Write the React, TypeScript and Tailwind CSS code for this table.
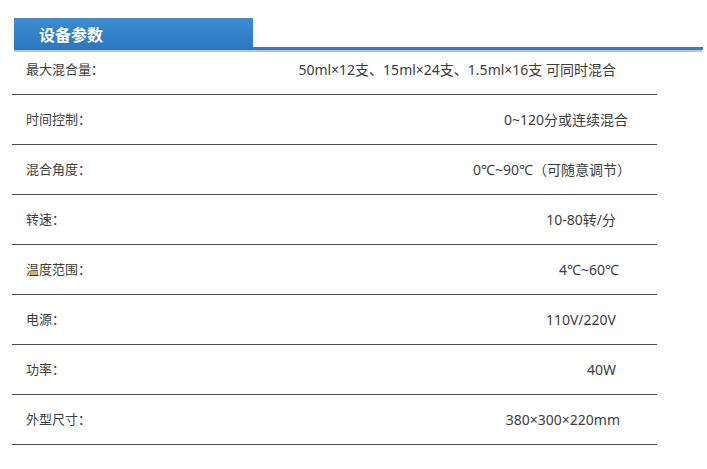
const rows = [
  { label: "最大混合量：", value: "50ml×12支、15ml×24支、1.5ml×16支 可同时混合", pr: "pr-[41px]" },
  { label: "时间控制：", value: "0~120分或连续混合", pr: "pr-[29px]" },
  { label: "混合角度：", value: "0℃~90℃（可随意调节）", pr: "pr-[26px]" },
  { label: "转速：", value: "10-80转/分", pr: "pr-[41px]" },
  { label: "温度范围：", value: "4℃~60℃", pr: "pr-[38px]" },
  { label: "电源：", value: "110V/220V", pr: "pr-[41px]" },
  { label: "功率：", value: "40W", pr: "pr-[41px]" },
  { label: "外型尺寸：", value: "380×300×220mm", pr: "pr-[37px]" },
];

export default function App() {
  return (
    <div
      className="w-[707px] h-[469px] bg-white text-[#3d3d3d]"
      style={{ fontFamily: '"Noto Sans", "Noto Sans CJK SC", sans-serif' }}
    >
      <div className="pt-[18px] pl-[14px] w-[703px]">
        <div className="flex items-end">
          <div
            className="w-[239px] h-[32px] bg-gradient-to-b from-[#3c8dd2] to-[#2a77c0] flex items-center pl-[25px] text-white text-[16px] font-bold"
            style={{ fontFamily: '"Noto Sans CJK SC", sans-serif' }}
          >
            设备参数
          </div>
          <div className="flex-1 h-[3px] bg-[#2f80c8]" />
        </div>
        <div className="h-[2px] bg-[#c4c4c4] mr-[1px]" />
      </div>
      <div className="ml-[12px] w-[645px] -mt-[7px]">
        {rows.map((r, i) => (
          <div
            key={i}
            className={`flex items-center justify-between h-[50px] border-b border-[#4a4a4a] pl-[14px] ${r.pr}`}
          >
            <span className="text-[13px]">{r.label}</span>
            <span className="text-[14px]">{r.value}</span>
          </div>
        ))}
      </div>
    </div>
  );
}
